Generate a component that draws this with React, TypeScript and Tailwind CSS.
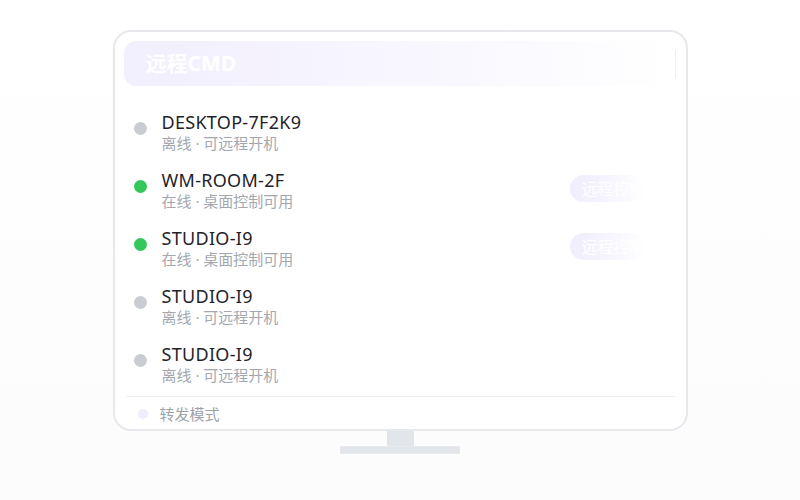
const devices = [
  { name: 'DESKTOP-7F2K9', online: false },
  { name: 'WM-ROOM-2F', online: true },
  { name: 'STUDIO-I9', online: true },
  { name: 'STUDIO-I9', online: false },
  { name: 'STUDIO-I9', online: false },
];

function DeviceRow({ name, online }: { name: string; online: boolean }) {
  return (
    <div className="flex h-[58px] items-start pl-[10px] pr-[32px] pt-[8px]">
      <span
        className={`mt-[11px] h-[13px] w-[13px] shrink-0 rounded-full ${online ? 'bg-[#34c759]' : 'bg-[#c9ccd3]'}`}
      />
      <div className="ml-[15px] flex-1">
        <div className="text-[18px] leading-[22px] tracking-[0.3px] text-[#1f2329]">{name}</div>
        <div className="text-[15px] leading-[20px] text-[#a3a8b0]">
          {online ? '在线 · 桌面控制可用' : '离线 · 可远程开机'}
        </div>
      </div>
      <div
        className={`mt-[6px] flex h-[27px] w-[75px] items-center overflow-hidden whitespace-nowrap rounded-full pl-[12px] text-[16px] text-white ${online ? 'bg-gradient-to-r from-[#f0edfd] via-[#f6f4fe] to-white' : 'invisible'}`}
      >
        远程控制
      </div>
    </div>
  );
}

export default function App() {
  return (
    <div
      className="flex h-[500px] w-[800px] flex-col items-center bg-gradient-to-b from-white to-[#fcfcfd] pt-[30px]"
      style={{ fontFamily: '"Noto Sans", "Noto Sans CJK SC", sans-serif' }}
    >
      <div className="flex h-[401px] w-[575px] flex-col rounded-[18px] border-2 border-[#e6e8ec] bg-white p-[9px]">
        <div className="flex h-[45px] shrink-0 items-center justify-between rounded-[12px] bg-gradient-to-r from-[#f2effe] via-[#f8f6fe] to-white pl-[22px] pr-[1px]">
          <span className="text-[21px] font-bold leading-none text-white">远程CMD</span>
          <div className="flex items-center gap-[10px]">
            <span className="text-[15px] text-white">远程</span>
            <span className="h-[28px] w-px bg-[#eef0f3]" />
          </div>
        </div>
        <div className="mt-[17px] flex flex-col">
          {devices.map((d, i) => (
            <DeviceRow key={i} name={d.name} online={d.online} />
          ))}
        </div>
        <div className="mx-[2px] mt-[3px] flex items-center border-t border-[#eef0f3] pt-[7px]">
          <span className="ml-[12px] h-[10px] w-[10px] rounded-full bg-[#efecfd]" />
          <span className="ml-[12px] text-[15px] leading-[20px] text-[#9ea3ab]">转发模式</span>
        </div>
      </div>
      <div className="h-[15px] w-[27px] bg-[#e2e6ea]" />
      <div className="h-[8px] w-[120px] border border-[#e8ebee] bg-[#e2e6ea]" />
    </div>
  );
}
